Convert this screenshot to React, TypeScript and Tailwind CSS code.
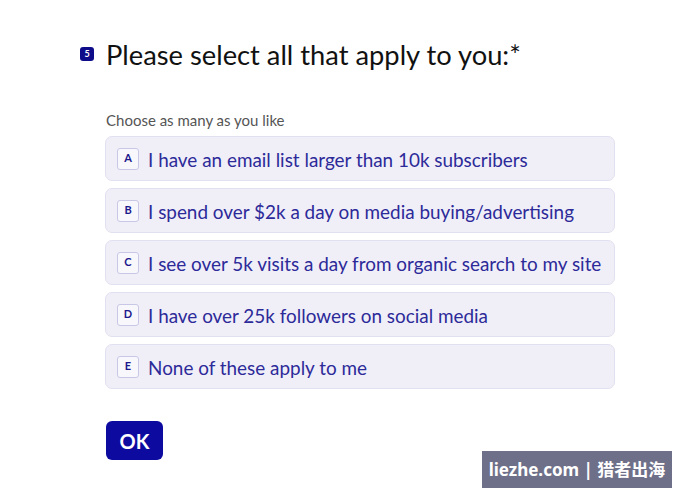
import React from "react";

const OPTIONS = [
  { key: "A", label: "I have an email list larger than 10k subscribers" },
  { key: "B", label: "I spend over $2k a day on media buying/advertising" },
  { key: "C", label: "I see over 5k visits a day from organic search to my site" },
  { key: "D", label: "I have over 25k followers on social media" },
  { key: "E", label: "None of these apply to me" },
];

const App = () => {
  return (
    <div className="relative w-[686px] h-[502px] bg-white overflow-hidden font-['Lato','Noto_Sans',sans-serif]">
      <div className="flex items-start pl-[80px] pt-[38px]">
        <div className="mt-[9px] w-[14px] h-[14px] shrink-0 rounded-[3px] bg-[#0f0c8a] text-white text-[9px] font-bold flex items-center justify-center">
          5
        </div>
        <div className="ml-[12px] flex flex-col">
          <h1 className="text-[27.3px] leading-[34px] text-[#111]">
            Please select all that apply to you:*
          </h1>
          <p className="mt-[39px] text-[15px] leading-[18px] text-[#555]">Choose as many as you like</p>
          <div className="mt-[7px] -ml-px flex flex-col gap-[7px]">
            {OPTIONS.map((o) => (
              <div
                key={o.key}
                className="w-[510px] h-[45px] flex items-center px-[11px] rounded-[7px] bg-[#f0eff8] border border-[#e1e0f0]"
              >
                <span className="w-[22px] h-[22px] shrink-0 flex items-center justify-center rounded-[3px] bg-[#f7f7fc] border border-[#c9c7e6] text-[11px] font-bold text-[#1c188c]">
                  {o.key}
                </span>
                <span className="ml-[9px] translate-y-[2px] text-[18.9px] text-[#2d2a99] whitespace-nowrap">{o.label}</span>
              </div>
            ))}
          </div>
          <button className="mt-[32px] w-[57px] h-[39px] rounded-[6px] bg-[#0d0aa0] text-white text-[20px] font-bold">
            OK
          </button>
        </div>
      </div>
      <div className="absolute left-[482px] top-[451px] w-[190px] h-[37px] bg-[#6e7089] text-white text-[17px] font-bold flex items-center justify-center font-['Noto_Sans','Noto_Sans_CJK_SC',sans-serif]">
        liezhe.com | 猎者出海
      </div>
    </div>
  );
};

export default App;
